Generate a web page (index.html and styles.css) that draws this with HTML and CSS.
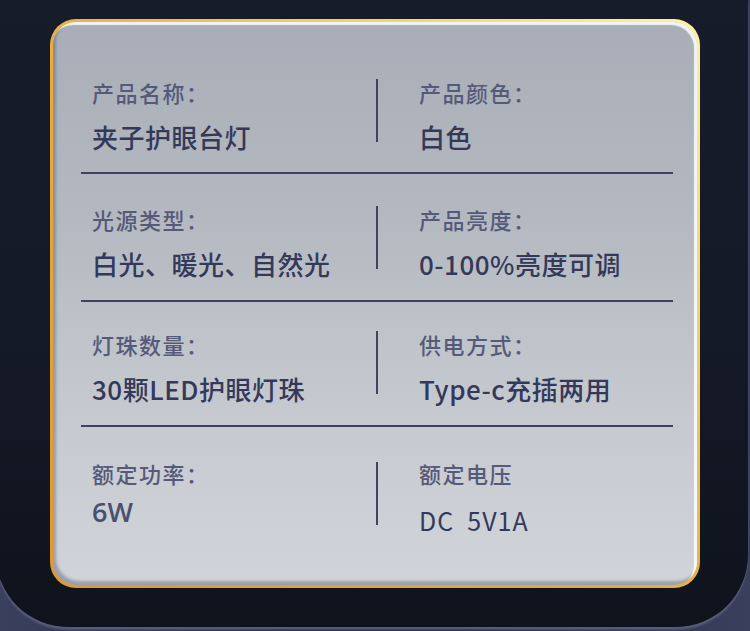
FILE: index.html
```html
<!DOCTYPE html>
<html lang="zh">
<head>
<meta charset="utf-8">
<link rel="stylesheet" href="styles.css">
</head>
<body>
<div class="frame">
  <div class="card">
    <div class="row row-1">
      <div class="cell cell-left">
        <div class="label">产品名称：</div>
        <div class="value">夹子护眼台灯</div>
      </div>
      <div class="vline"></div>
      <div class="cell cell-right">
        <div class="label">产品颜色：</div>
        <div class="value">白色</div>
      </div>
    </div>
    <div class="row row-2">
      <div class="cell cell-left">
        <div class="label">光源类型：</div>
        <div class="value">白光、暖光、自然光</div>
      </div>
      <div class="vline"></div>
      <div class="cell cell-right">
        <div class="label">产品亮度：</div>
        <div class="value">0-100%亮度可调</div>
      </div>
    </div>
    <div class="row row-3">
      <div class="cell cell-left">
        <div class="label">灯珠数量：</div>
        <div class="value">30颗LED护眼灯珠</div>
      </div>
      <div class="vline"></div>
      <div class="cell cell-right">
        <div class="label">供电方式：</div>
        <div class="value">Type-c充插两用</div>
      </div>
    </div>
    <div class="row row-4">
      <div class="cell cell-left">
        <div class="label">额定功率：</div>
        <div class="value value-w">6W</div>
      </div>
      <div class="vline vline-4"></div>
      <div class="cell cell-right">
        <div class="label">额定电压</div>
        <div class="value value-dc">DC&nbsp;&nbsp;5V1A</div>
      </div>
    </div>
  </div>
</div>
</body>
</html>
```
FILE: styles.css
```css
html, body {
  margin: 0;
  padding: 0;
}
body {
  width: 750px;
  height: 631px;
  overflow: hidden;
  background: linear-gradient(90deg, #3a3f5c, #2a2f47 40%, #2a2f47 60%, #3a3f5c);
  font-family: "Noto Sans CJK SC", "Noto Sans", sans-serif;
}
.frame {
  width: 752px;
  height: 627px;
  margin-left: -4px;
  box-sizing: border-box;
  padding-top: 19px;
  padding-left: 54px;
  border-radius: 0 0 72px 72px;
  background: linear-gradient(180deg, #171c2a 0%, #141926 60%, #0f131c 100%);
  box-shadow: 0 2px 0 #555a78, 0 3px 2px rgba(120,125,160,.4);
  overflow: hidden;
}
.card {
  width: 650px;
  height: 569px;
  box-sizing: border-box;
  border: 3px solid transparent;
  border-radius: 26px;
  background:
    linear-gradient(180deg, #a8aeb7 0%, #b4b9c1 35%, #c6cad0 70%, #d1d4d9 100%) padding-box,
    linear-gradient(to bottom left, #fff3a0 0%, #f3cc60 30%, #e8aa3e 55%, #e09830 100%) border-box;
  box-shadow:
    inset -3px 3px 1px rgba(255,255,255,.85),
    inset 3px -4px 3px rgba(90,95,110,.45);
  padding: 0 24px 0 28px;
}
.row {
  display: grid;
  grid-template-columns: 295px 2px 1fr;
  align-items: start;
  border-bottom: 2px solid #3d4260;
}
.row-4 { border-bottom: 0; }
.row-1 { padding: 56px 0 18px; }
.row-2 { padding: 31px 0 19px; }
.row-3 { padding: 28px 0 19px; }
.row-4 { padding: 32px 0 0; }
.cell-left { padding-left: 11px; }
.cell-right { padding-left: 41px; }
.vline {
  width: 2px;
  height: 63px;
  margin-top: 1px;
  background: #3f4461;
}
.vline-4 { margin-top: 3px; }
.label {
  font-size: 22px;
  line-height: 28px;
  letter-spacing: 1.5px;
  color: #555a79;
  font-weight: 500;
}
.value {
  margin-top: 14px;
  font-size: 26px;
  line-height: 34px;
  letter-spacing: 0.5px;
  color: #353959;
  font-weight: 500;
}
.value-w {
  margin-top: 8px;
  font-family: "Open Sans", sans-serif;
  font-weight: 600;
  font-size: 27px;
  letter-spacing: 0;
  color: #4a4f70;
}
.value-dc {
  margin-top: 16px;
  font-size: 25px;
  font-weight: 400;
  letter-spacing: 1px;
}
```
